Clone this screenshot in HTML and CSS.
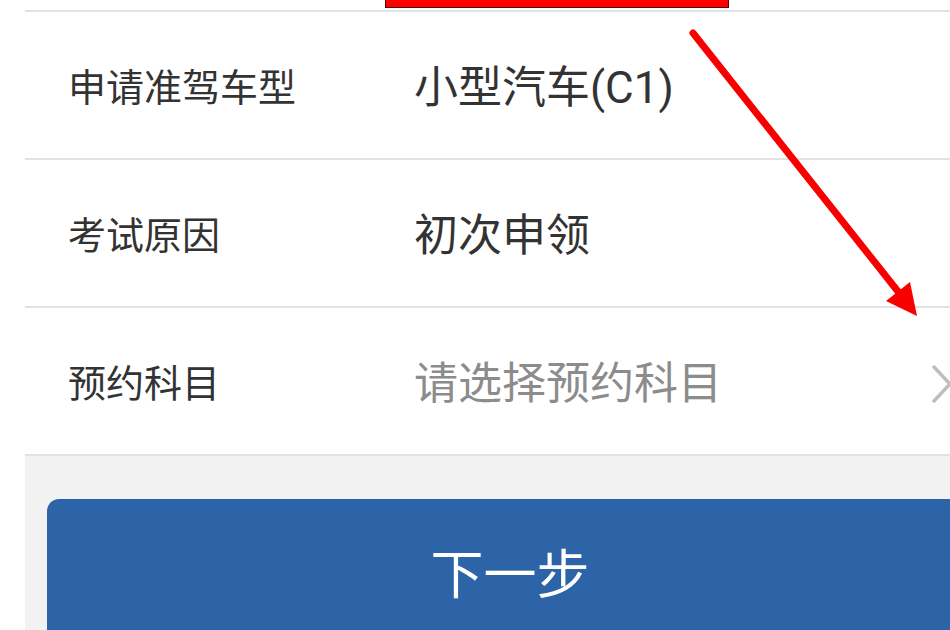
FILE: index.html
```html
<!DOCTYPE html>
<html lang="zh-CN">
<head>
<meta charset="utf-8">
<title>预约考试</title>
<link rel="stylesheet" href="styles.css">
</head>
<body>
<div class="page">
  <div class="top-gap"></div>
  <div class="form-list">
    <div class="form-row">
      <div class="label">申请准驾车型</div>
      <div class="value">小型汽车(C1)</div>
    </div>
    <div class="form-row">
      <div class="label">考试原因</div>
      <div class="value">初次申领</div>
    </div>
    <div class="form-row">
      <div class="label">预约科目</div>
      <div class="value placeholder">请选择预约科目</div>
      <svg class="chevron" viewBox="0 0 22 40" width="22" height="40" aria-hidden="true">
        <polyline points="3,3 19,20 3,37" fill="none" stroke="#bdbdbd" stroke-width="3.5" stroke-linecap="round" stroke-linejoin="round"/>
      </svg>
    </div>
  </div>
  <div class="footer">
    <button class="next-btn" type="button">下一步</button>
  </div>
</div>
<div class="mark-box"></div>
<svg class="mark-arrow" width="950" height="630" viewBox="0 0 950 630" aria-hidden="true">
  <line x1="693" y1="33" x2="900" y2="294" stroke="#f80000" stroke-width="7" stroke-linecap="round"/>
  <polygon points="917,316 886,301 910,282" fill="#f80000"/>
</svg>
</body>
</html>
```

FILE: styles.css
```css
html, body {
  margin: 0;
  padding: 0;
  background: #ffffff;
  overflow: hidden;
}

body {
  width: 950px;
  height: 630px;
  position: relative;
  font-family: "Roboto", "Noto Sans CJK SC", sans-serif;
}

.page {
  margin-left: 25px;
  width: 970px;
  height: 630px;
  overflow: hidden;
}

.top-gap {
  height: 10px;
  background: #ffffff;
}

.form-list {
  background: #ffffff;
  border-bottom: 2px solid #e2e2e2;
}

.form-row {
  display: flex;
  align-items: center;
  height: 140px;
  box-sizing: content-box;
  border-top: 2px solid #e2e2e2;
  padding: 6px 42px 0 43px;
}

.label {
  width: 346px;
  flex: none;
  font-size: 38px;
  line-height: 1;
  color: #333333;
}

.value {
  flex: 1;
  font-size: 44px;
  line-height: 1;
  color: #333333;
}

.value.placeholder {
  color: #8c8c8c;
}

.chevron {
  flex: none;
  display: block;
}

.footer {
  background: #f2f2f2;
  padding: 43px 22px 0;
  height: 200px;
}

.next-btn {
  display: block;
  width: 100%;
  height: 144px;
  border: none;
  border-radius: 12px;
  background: #2c64a7;
  color: #ffffff;
  font-family: "Noto Sans CJK SC", sans-serif;
  font-size: 53px;
  line-height: 1;
  padding: 0;
  text-align: center;
}

.mark-box {
  position: absolute;
  left: 385px;
  top: -10px;
  width: 342px;
  height: 16px;
  background: #fe0000;
  border: 1px solid #5a0000;
}

.mark-arrow {
  position: absolute;
  left: 0;
  top: 0;
  pointer-events: none;
}
```
